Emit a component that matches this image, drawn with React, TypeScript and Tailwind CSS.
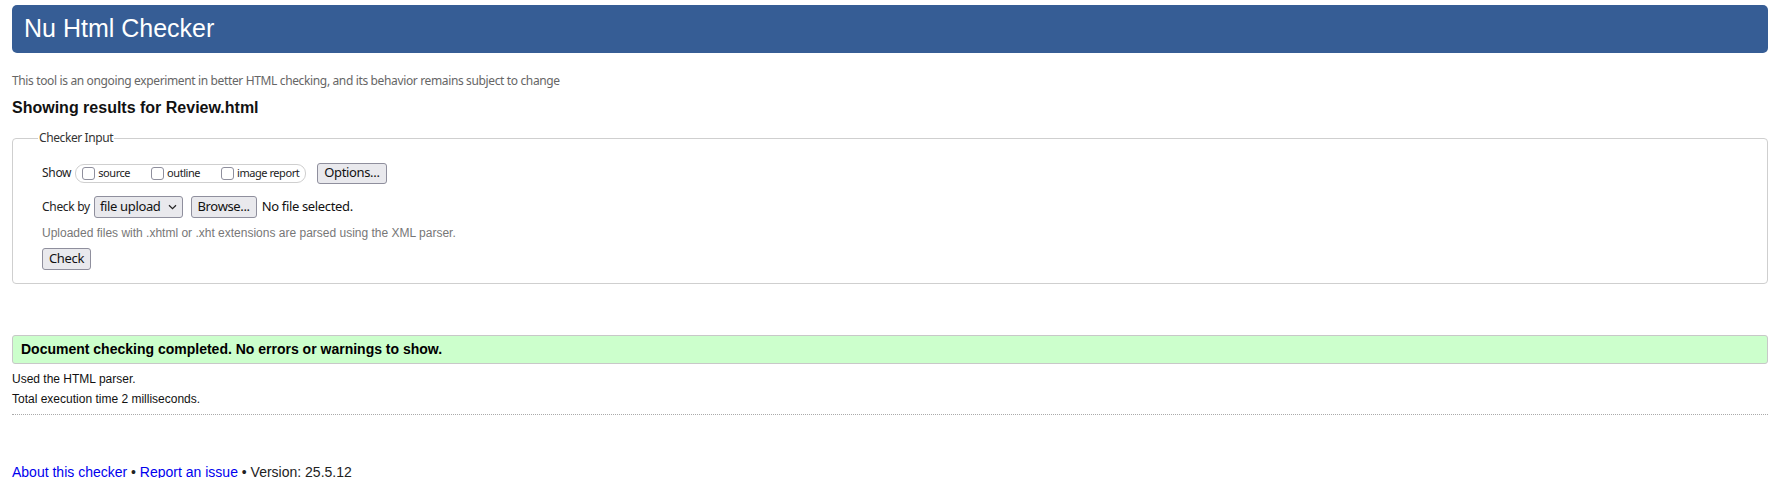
import React from 'react'

function Box({ label }: { label: string }) {
  return (
    <span className="flex items-center">
      <span className="w-[13px] h-[13px] border border-[#8f8f9d] rounded-[3px] bg-white" />
      <span className="ml-[3px] text-[11px] leading-[14px] tracking-[-0.45px] text-[#222]">{label}</span>
    </span>
  )
}

function Btn({ children, className = '' }: { children: React.ReactNode; className?: string }) {
  return (
    <span
      className={
        'h-[21px] flex items-center px-[6px] bg-[#e9e9ed] border border-[#8f8f9d] rounded-[3px] text-[13px] tracking-[-0.35px] text-[#111] ' +
        className
      }
    >
      {children}
    </span>
  )
}

export default function App() {
  return (
    <div className="bg-white min-h-screen pl-[12px] pr-[18px] pt-[5px] font-['Liberation_Sans',Arial,sans-serif] text-black">
      <div className="h-[48px] rounded-[5px] bg-[#365d95] text-white text-[25px] pl-[12px] flex items-center">
        Nu Html Checker
      </div>

      <p className="mt-[20px] text-[12px] leading-[16px] text-[#666] font-['Noto_Sans',sans-serif] tracking-[-0.36px]">
        This tool is an ongoing experiment in better HTML checking, and its behavior remains subject to change
      </p>

      <h2 className="mt-[9px] text-[16px] leading-[20px] font-bold text-[#111]">Showing results for Review.html</h2>

      <fieldset className="mt-[12px] border border-[#cfcfcf] rounded-[4px] pl-[29px] pb-[13px] font-['Noto_Sans',sans-serif]">
        <legend className="-ml-[4px] px-[1px] text-[12px] leading-[16px] tracking-[-0.4px] text-[#333]">Checker Input</legend>

        <div className="mt-[16px] h-[22px] flex items-center">
          <span className="text-[12px] tracking-[-0.3px] text-[#222]">Show</span>
          <div className="ml-[4px] h-[19px] flex items-center gap-[21px] border border-[#cfcfcf] rounded-[9px] pl-[6px] pr-[6px]">
            <Box label="source" />
            <Box label="outline" />
            <Box label="image report" />
          </div>
          <Btn className="ml-[11px]">Options...</Btn>
        </div>

        <div className="mt-[12px] h-[22px] flex items-center">
          <span className="text-[12px] tracking-[-0.3px] text-[#222]">Check by</span>
          <span className="ml-[4px] h-[22px] flex items-center pl-[5px] pr-[5px] bg-[#e9e9ed] border border-[#8f8f9d] rounded-[3px] text-[13px] tracking-[-0.35px] text-[#111]">
            file upload
            <svg className="ml-[7px]" width="9" height="6" viewBox="0 0 9 6" fill="none">
              <path d="M1 1.2 L4.5 4.6 L8 1.2" stroke="#222" strokeWidth="1.2" />
            </svg>
          </span>
          <Btn className="ml-[8px] h-[22px]">Browse...</Btn>
          <span className="ml-[5px] text-[13px] tracking-[-0.35px] text-[#111]">No file selected.</span>
        </div>

        <p className="mt-[7px] text-[12px] leading-[16px] text-[#777] font-['Liberation_Sans',Arial,sans-serif]">
          Uploaded files with .xhtml or .xht extensions are parsed using the XML parser.
        </p>

        <div className="mt-[7px] flex">
          <Btn className="h-[22px]">Check</Btn>
        </div>
      </fieldset>

      <div className="mt-[51px] h-[29px] flex items-center pl-[8px] bg-[#ccffcc] border border-[#c8c8c8] rounded-[3px] text-[14px] font-bold text-black">
        Document checking completed. No errors or warnings to show.
      </div>

      <p className="mt-[5px] text-[12px] leading-[20px] text-[#111]">Used the HTML parser.</p>
      <p className="text-[12px] leading-[20px] text-[#111]">Total execution time 2 milliseconds.</p>

      <div className="mt-[5px] border-t border-dotted border-[#aaa]" />

      <p className="mt-[48px] text-[14px] leading-[18px] text-[#222]">
        <a className="text-[#0000ee] underline">About this checker</a>
        {' • '}
        <a className="text-[#0000ee] underline">Report an issue</a>
        {' • Version: 25.5.12'}
      </p>
    </div>
  )
}
